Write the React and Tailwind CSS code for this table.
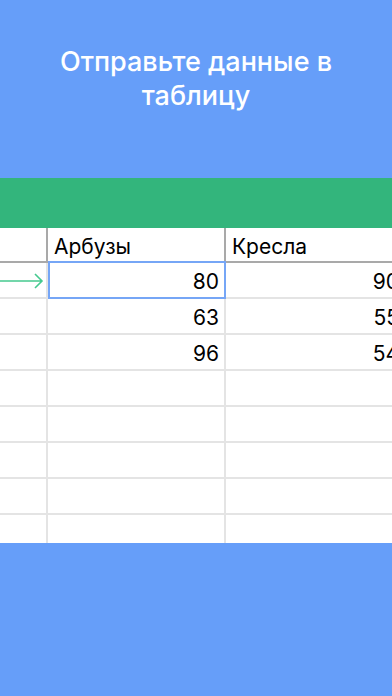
import React from "react";

const rows = [
  ["80", "90"],
  ["63", "55"],
  ["96", "54"],
  ["", ""],
  ["", ""],
  ["", ""],
  ["", ""],
  ["", ""],
];

export default function App() {
  return (
    <div
      className="w-[392px] h-[696px] bg-[#669ef9] flex flex-col overflow-hidden"
      style={{ fontFamily: "Inter, 'Liberation Sans', sans-serif" }}
    >
      <div className="h-[178px] shrink-0 flex justify-center pt-[45px]">
        <h1 className="text-white text-[27px] leading-[34px] font-medium text-center w-[320px]">
          Отправьте данные в таблицу
        </h1>
      </div>
      <div className="h-[365px] shrink-0 bg-white flex flex-col overflow-hidden">
        <div className="h-[50px] shrink-0 bg-[#33b57c]" />
        <div className="flex h-[35px] shrink-0 border-b-2 border-[#a9a9a9] text-[21px] text-black">
          <div className="w-[48px] shrink-0 border-r-2 border-[#a9a9a9]" />
          <div className="w-[178px] shrink-0 border-r-2 border-[#a9a9a9] flex items-center pl-[6px] pt-[4px]">
            Арбузы
          </div>
          <div className="w-[178px] shrink-0 flex items-center pl-[6px] pt-[4px]">Кресла</div>
        </div>
        {rows.map((r, i) => (
          <div key={i} className="flex h-[36px] shrink-0 border-b-2 border-[#e4e4e4] text-[21px] text-black">
            <div className="w-[48px] shrink-0 border-r-2 border-[#e4e4e4] relative">
              {i === 0 && (
                <svg className="absolute left-0 top-[8px]" width="46" height="20" viewBox="0 0 46 20">
                  <path d="M0 10 H42 M35 3 L42 10 L35 17" fill="none" stroke="#45c98f" strokeWidth="1.6" />
                </svg>
              )}
            </div>
            <div className="w-[178px] shrink-0 border-r-2 border-[#e4e4e4] flex items-center justify-end pr-[5px] pt-[3px] relative">
              {i === 0 && (
                <div className="absolute left-0 top-[-2px] w-[178px] h-[38px] border-2 border-[#76a6f6] pointer-events-none" />
              )}
              {r[0]}
            </div>
            <div className="w-[178px] shrink-0 flex items-center justify-end pr-[5px] pt-[3px]">{r[1]}</div>
          </div>
        ))}
      </div>
      <div className="flex-1" />
    </div>
  );
}
